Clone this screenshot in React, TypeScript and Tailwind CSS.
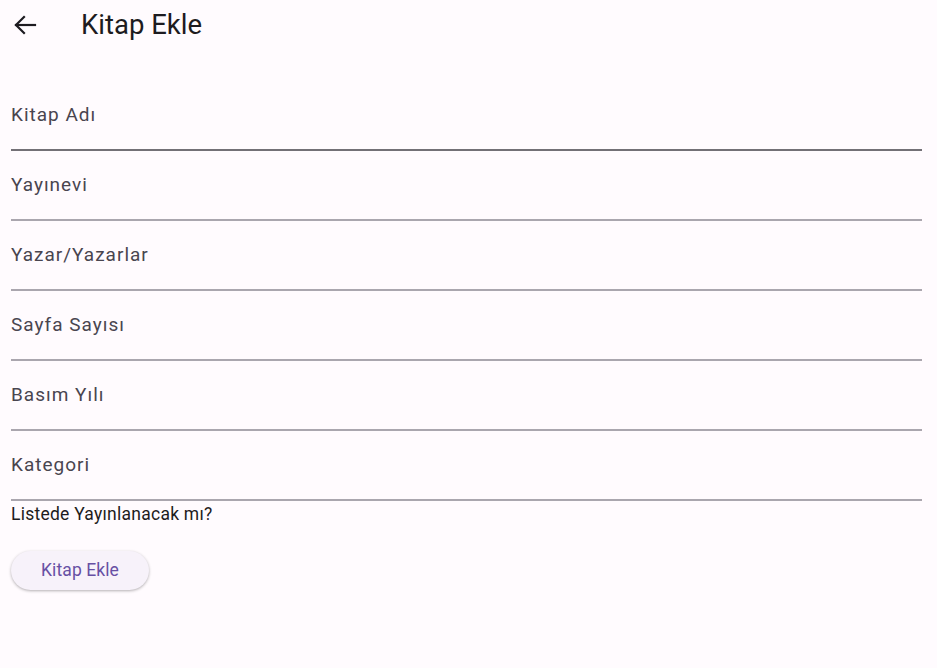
import React from "react";

const fields = ["Kitap Adı", "Yayınevi", "Yazar/Yazarlar", "Sayfa Sayısı", "Basım Yılı", "Kategori"];

export default function App() {
  return (
    <div className="w-[937px] h-[668px] bg-[#fffbfe] overflow-hidden" style={{ fontFamily: "Roboto, 'Liberation Sans', sans-serif" }}>
      <div className="h-[50px] flex items-center">
        <div className="w-[72px] pl-[14px] flex items-center">
          <svg width="24" height="20" viewBox="0 0 24 20" fill="none" stroke="#1d1b20" strokeWidth="2.2" strokeLinecap="square">
            <path d="M2 10H21" />
            <path d="M10 2L2 10L10 18" strokeLinejoin="miter" />
          </svg>
        </div>
        <div className="pl-[9px] text-[27.5px] text-[#1d1b20] leading-none">Kitap Ekle</div>
      </div>
      <div className="pl-[11px] pr-[15px] pt-[31px]">
        {fields.map((f, i) => (
          <div key={f} className="h-[70px] flex flex-col">
            <div className="flex-1 flex items-center text-[19px] tracking-[1px] text-[#49454f]">{f}</div>
            <div className={i === 0 ? "h-[2px] bg-[#737076]" : "h-[2px] bg-[#aaa6ae]"} />
          </div>
        ))}
        <div className="pt-[2px] text-[17.5px] leading-[22px] text-[#1d1b20] tracking-[0.25px]">Listede Yayınlanacak mı?</div>
        <div className="pt-[26px]">
          <button className="h-[39px] w-[138px] rounded-full bg-[#f7f2fa] text-[#6750a4] text-[17.5px] tracking-[0.1px] shadow-[0_1px_3px_rgba(0,0,0,0.3)]">
            Kitap Ekle
          </button>
        </div>
      </div>
    </div>
  );
}
